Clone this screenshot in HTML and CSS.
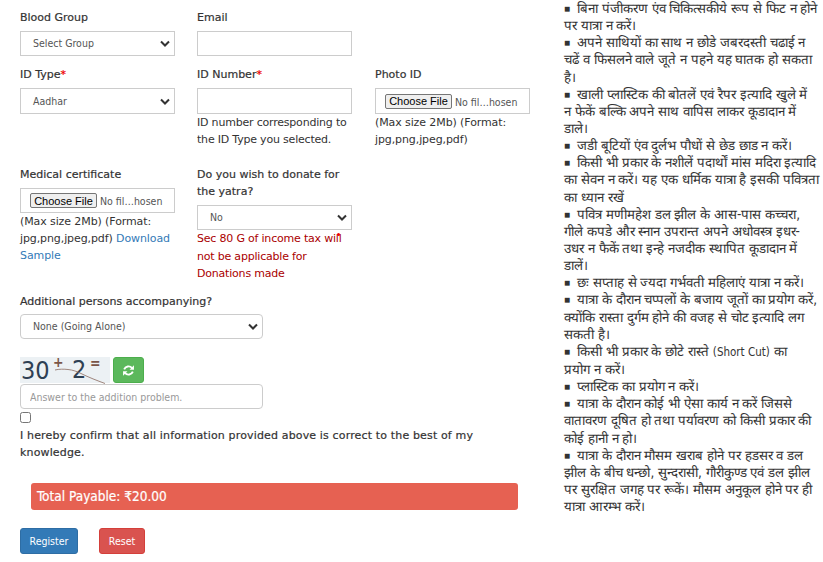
FILE: index.html
```html
<!DOCTYPE html>
<html lang="hi">
<head>
<meta charset="utf-8">
<title>Registration</title>
<link rel="stylesheet" href="styles.css">
</head>
<body>
<div class="page">
  <form class="form">
    <div class="grid">
      <div class="field f1">
        <label class="lbl">Blood Group</label>
        <div class="ctl sel">Select Group<svg class="chev" viewBox="0 0 10 7"><path d="M1 1.5l4 4 4-4" fill="none" stroke="#333" stroke-width="2"/></svg></div>
      </div>
      <div class="field f1">
        <label class="lbl">Email</label>
        <input class="ctl" type="text">
      </div>
      <div></div>
      <div class="field f2">
        <label class="lbl">ID Type<span class="req">*</span></label>
        <div class="ctl tall sel">Aadhar<svg class="chev" viewBox="0 0 10 7"><path d="M1 1.5l4 4 4-4" fill="none" stroke="#333" stroke-width="2"/></svg></div>
      </div>
      <div class="field f2">
        <label class="lbl">ID Number<span class="req">*</span></label>
        <input class="ctl tall" type="text">
        <p class="help">ID number corresponding to the ID Type you selected.</p>
      </div>
      <div class="field f2">
        <label class="lbl">Photo ID</label>
        <div class="ctl tall file"><input type="file" class="fileinput"></div>
        <p class="help fmt">(Max size 2Mb) (Format: jpg,png,jpeg,pdf)</p>
      </div>
      <div class="field f3">
        <label class="lbl">Medical certificate</label>
        <div class="ctl file"><input type="file" class="fileinput"></div>
        <p class="help fmt">(Max size 2Mb) (Format: jpg,png,jpeg,pdf) <a class="link" href="#">Download Sample</a></p>
      </div>
      <div class="field f3">
        <label class="lbl auto">Do you wish to donate for the yatra?</label>
        <div class="ctl sel">No<svg class="chev" viewBox="0 0 10 7"><path d="M1 1.5l4 4 4-4" fill="none" stroke="#333" stroke-width="2"/></svg></div>
        <p class="help warn">Sec 80 G of income tax will not be applicable for Donations made<span class="dot"></span></p>
      </div>
    </div>

    <div class="wide">
      <label class="lbl">Additional persons accompanying?</label>
      <div class="ctl wideinput sel round">None (Going Alone)<svg class="chev" viewBox="0 0 10 7"><path d="M1 1.5l4 4 4-4" fill="none" stroke="#333" stroke-width="2"/></svg></div>
    </div>

    <div class="captcha">
      <div class="capimg">
        <span class="capbig cap30">30</span>
        <span class="capop capplus">+</span>
        <span class="capbig cap2">2</span>
        <span class="capop capeq">=</span>
        <svg class="capline" viewBox="0 0 90 27" width="90" height="27"><path d="M35 13c4-1 9-1 13-.5 5 .5 9 2 13 4 8 4 16 7 24 10" fill="none" stroke="#8a6a5e" stroke-width=".8"/></svg>
      </div>
      <button type="button" class="refresh"><svg viewBox="0 0 24 24" width="13" height="13"><path d="M18.5 7.5A8.5 8.5 0 0 0 4 10" fill="none" stroke="#fff" stroke-width="3.4"/><path d="M22 2.5v8h-8z" fill="#fff"/><path d="M5.5 16.5A8.5 8.5 0 0 0 20 14" fill="none" stroke="#fff" stroke-width="3.4"/><path d="M2 21.5v-8h8z" fill="#fff"/></svg></button>
    </div>
    <input class="ctl wideinput round answer" type="text" placeholder="Answer to the addition problem.">
    <input class="check" type="checkbox">
    <p class="confirm">I hereby confirm that all information provided above is correct to the best of my knowledge.</p>
    <div class="total">Total Payable: ₹20.00</div>
    <div class="actions">
      <button type="button" class="btn blue">Register</button>
      <button type="button" class="btn red">Reset</button>
    </div>
  </form>

  <div class="rules">
    <p>बिना पंजीकरण एंव चिकित्सकीये रूप से फिट न होने<br>पर यात्रा न करें।</p>
    <p>अपने साथियों का साथ न छोडे जबरदस्ती चढाई न<br>चढें व फिसलने वाले जूते न पहने यह घातक हो सकता<br>है।</p>
    <p>खाली प्लास्टिक की बोतलें एवं रैपर इत्यादि खुले में<br>न फेकें बल्कि अपने साथ वापिस लाकर कूडादान में<br>डाले।</p>
    <p>जडी बूटियों एंव दुर्लभ पौधों से छेड छाड न करें।</p>
    <p>किसी भी प्रकार के नशीलें पदार्थों मांस मदिरा इत्यादि<br>का सेवन न करें। यह एक धर्मिक यात्रा है इसकी पवित्रता<br>का ध्यान रखें</p>
    <p>पवित्र मणीमहेश डल झील के आस-पास कच्चरा,<br>गीले कपडे और स्नान उपरान्त अपने अधोवस्त्र इधर-<br>उधर न फैकें तथा इन्हे नजदीक स्थापित कूडादान में<br>डालें।</p>
    <p>छः सप्ताह से ज्यदा गर्भवती महिलाएं यात्रा न करें।</p>
    <p>यात्रा के दौरान चप्पलों के बजाय जूतों का प्रयोग करें,<br>क्योंकि रास्ता दुर्गम होने की वजह से चोट इत्यादि लग<br>सकती है।</p>
    <p>किसी भी प्रकार के छोटे रास्ते <span class="latin">(Short Cut)</span> का<br>प्रयोग न करें।</p>
    <p>प्लास्टिक का प्रयोग न करें।</p>
    <p>यात्रा के दौरान कोई भी ऐसा कार्य न करें जिससे<br>वातावरण दूषित हो तथा पर्यावरण को किसी प्रकार की<br>कोई हानी न हो।</p>
    <p>यात्रा के दौरान मौसम खराब होने पर हडसर व डल<br>झील के बीच धन्छो, सुन्दरासी, गौरीकुण्ड एवं डल झील<br>पर सुरक्षित जगह पर रूकें। मौसम अनुकूल होने पर ही<br>यात्रा आरम्भ करें।</p>
  </div>
</div>
</body>
</html>
```
FILE: styles.css
```css
* { box-sizing: border-box; }
html, body { margin: 0; padding: 0; background: #fff; }
body {
  width: 823px;
  height: 562px;
  overflow: hidden;
  font-family: "DejaVu Sans", "Noto Sans", sans-serif;
  font-size: 11px;
  line-height: 17px;
  color: #333;
}
.page { display: flex; align-items: flex-start; padding-left: 20px; }
.form { width: 510px; flex: none; padding-top: 9px; }
.grid {
  display: grid;
  grid-template-columns: 155px 156px 155px;
  column-gap: 22px;
}
.f1 { height: 57px; }
.f2 { height: 100px; }
.f3 { height: 133px; }
.lbl { display: block; height: 17px; margin-bottom: 5px; color: #333; -webkit-text-stroke: 0.2px #333; }
.lbl.auto { height: 34px; }
.req { color: #e00; -webkit-text-stroke: 0.2px #e00; }
.ctl {
  display: block;
  width: 155px;
  height: 25px;
  border: 1px solid #ccc;
  background: #fff;
  color: #555;
  font-family: "DejaVu Sans Condensed", "DejaVu Sans", sans-serif;
  font-size: 10.5px;
  padding: 0 12px;
}
.tall { height: 26px; }
.sel { display: flex; align-items: center; justify-content: space-between; padding-right: 4px; }
.chev { width: 10px; height: 7px; flex: none; }
.file { padding: 0 9px; display: flex; align-items: center; overflow: hidden; }
.fileinput { width: 135px; flex: none; font-family: "DejaVu Sans Condensed", "DejaVu Sans", sans-serif; font-size: 10.5px; margin: 0; color: #555; }
.fileinput::file-selector-button {
  font-family: "Liberation Sans", sans-serif;
  font-size: 11px;
  color: #000;
  height: 15px;
  line-height: 12px;
  width: 67px;
  padding: 0;
  margin: 0 3px 0 0;
  background: #efefef;
  border: 1px solid #767676;
  border-radius: 2px;
}
.help { margin: 0; color: #333; letter-spacing: -0.2px; position: relative; }
.fmt { letter-spacing: -0.1px; }
.warn { color: #a00; line-height: 17.5px; }
.dot { position: absolute; left: 140px; top: 3px; width: 3px; height: 3px; border-radius: 50%; background: #e00; }
.link { color: #337ab7; text-decoration: none; }
.wide { margin-top: -6px; }
.wideinput { width: 243px; }
.round { border-radius: 4px; }
.wide .lbl { margin-bottom: 4px; }
.captcha { display: flex; align-items: flex-start; gap: 3px; margin-top: 18px; height: 27px; }
.capimg { position: relative; width: 90px; height: 26px; flex: none; background: #ecf1f4; }
.capbig, .capop { position: absolute; font-family: "DejaVu Sans Condensed", "DejaVu Sans", sans-serif; }
.capbig { font-size: 25px; line-height: 22px; color: #2e4053; }
.cap30 { left: 1px; top: 3px; }
.cap2 { left: 52px; top: 2px; }
.capop { font-size: 14px; font-weight: bold; line-height: 10px; color: #7a5548; }
.capplus { left: 33px; top: 0; }
.capeq { left: 70px; top: 1px; }
.capline { position: absolute; left: 0; top: 0; }
.refresh {
  display: flex; align-items: center; justify-content: center;
  width: 31px; height: 26px; padding: 0;
  background: #5cb85c; border: 1px solid #4cae4c; border-radius: 3px;
}
.answer { margin-top: 0; padding: 0 9px; }
.answer::placeholder { color: #999; opacity: 1; }
.check { display: block; width: 11px; height: 11px; margin: 3px 0 0; }
.confirm { margin: 4px 0 0; width: 490px; letter-spacing: 0.15px; -webkit-text-stroke: 0.2px #333; }
.total {
  margin: 22px 0 0 11px;
  width: 487px;
  height: 27px;
  background: #e66152;
  border-radius: 3px;
  color: #fff;
  font-family: "DejaVu Sans Condensed", "DejaVu Sans", sans-serif;
  font-size: 13.5px;
  line-height: 27px;
  padding-left: 6px;
  -webkit-text-stroke: 0.2px #fff;
}
.actions { display: flex; gap: 21px; margin-top: 18px; }
.btn {
  height: 26px;
  padding: 0;
  color: #fff;
  font-family: "DejaVu Sans Condensed", "DejaVu Sans", sans-serif;
  font-size: 10.5px;
  border-radius: 3px;
  border: 1px solid;
}
.blue { background: #337ab7; border-color: #2e6da4; width: 58px; }
.red { background: #d9534f; border-color: #d43f3a; width: 46px; }
.rules { width: 259px; margin-left: 34px; flex: none; color: #333; font-family: "DejaVu Sans Condensed", "DejaVu Sans", sans-serif; font-size: 13.3px; line-height: 17.14px; }
.rules p { margin: 0; }
.rules p::before { content: "■"; margin-right: 7px; font-family: "Liberation Sans", sans-serif; font-size: 10px; line-height: 0; vertical-align: 1px; }
.latin { font-size: 11.5px; }
```
